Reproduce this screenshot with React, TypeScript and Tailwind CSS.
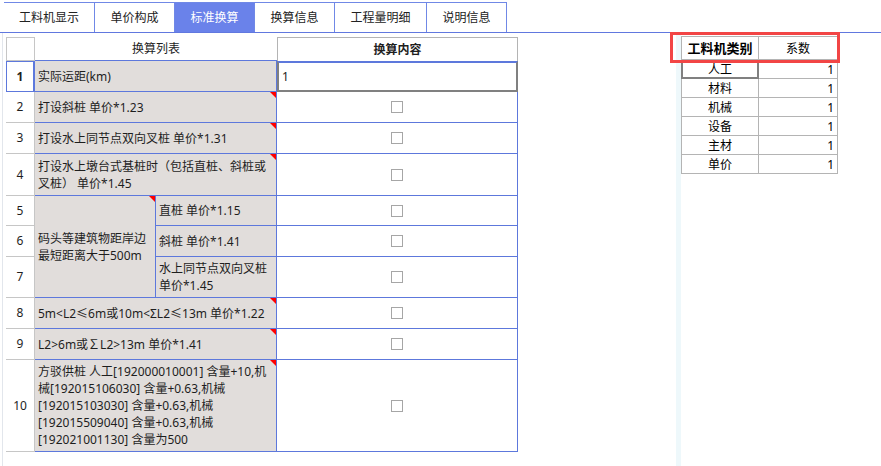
import React from "react";

const BLUE = "border-[#5d78dc]";

function Tri() {
  return (
    <span className="absolute top-0 right-0 w-0 h-0 border-t-[6px] border-l-[6px] border-t-[#ff0000] border-l-transparent" />
  );
}

function Check() {
  return <span className="block w-[12px] h-[12px] border border-[#a6a6a6] bg-white" />;
}

const tabs = [
  { t: "工料机显示", w: "w-[91px]" },
  { t: "单价构成", w: "w-[80px]" },
  { t: "标准换算", w: "w-[80px]", active: true },
  { t: "换算信息", w: "w-[80px]" },
  { t: "工程量明细", w: "w-[92px]" },
  { t: "说明信息", w: "w-[80px]" },
];

const rightRows = ["人工", "材料", "机械", "设备", "主材", "单价"];

export default function App() {
  const num = "flex items-center justify-center border-r border-b border-[#c6c6c6] bg-white";
  const list = `relative flex items-center pl-[3px] pr-[2px] bg-[#e1dddb] border-r border-b ${BLUE} leading-[17px]`;
  const content = `flex items-center justify-center bg-white border-r border-b ${BLUE}`;
  return (
    <div
      className="relative w-[881px] h-[466px] bg-white overflow-hidden flex flex-col text-[12px] text-[#1e1e1e]"
      style={{ fontFamily: '"Noto Sans", "Noto Sans CJK SC", sans-serif' }}
    >
      {/* Tabs */}
      <div className="h-[33px] shrink-0 flex pl-[4px] pt-[2px] border-b border-[#6178df]">
        {tabs.map((tb) => (
          <div
            key={tb.t}
            className={`${tb.w} h-[30px] flex items-center justify-center border-t border-r border-[#7088e6] ${
              tb.active ? "bg-[#6a82ea] text-white" : "bg-white text-[#222]"
            }`}
          >
            {tb.t}
          </div>
        ))}
      </div>

      {/* Body */}
      <div className="flex flex-1">
        {/* Left grid */}
        <div className="ml-[2px] w-[674px] border-l border-[#e2e6ec] pl-[3px] pt-[4px]">
          <div className="grid grid-cols-[29px_121px_121px_241px] grid-rows-[24px_31px_31px_31px_42px_30px_31px_41px_31px_31px_92px]">
            {/* header */}
            <div className="border border-[#c6c6c6] bg-white" />
            <div className={`col-span-2 flex items-center justify-center bg-white border-b ${BLUE}`}>换算列表</div>
            <div className="flex items-center justify-center bg-white border border-[#b4b4b4] border-b-0 font-bold">换算内容</div>

            {/* row 1 */}
            <div className={`flex items-center justify-center border border-r-2 ${BLUE} font-bold bg-white`}>1</div>
            <div className={`col-span-2 ${list}`}>实际运距(km)</div>
            <div className="flex items-center pl-[3px] bg-white border-2 border-[#808080] border-t-[#5d78dc]">1</div>

            {/* row 2 */}
            <div className={num}>2</div>
            <div className={`col-span-2 ${list}`}>
              打设斜桩 单价*1.23
              <Tri />
            </div>
            <div className={content}>
              <Check />
            </div>

            {/* row 3 */}
            <div className={num}>3</div>
            <div className={`col-span-2 ${list}`}>
              打设水上同节点双向叉桩 单价*1.31
              <Tri />
            </div>
            <div className={content}>
              <Check />
            </div>

            {/* row 4 */}
            <div className={num}>4</div>
            <div className={`col-span-2 ${list}`}>
              <span className="whitespace-nowrap">
                打设水上墩台式基桩时（包括直桩、斜桩或
                <br />
                叉桩） 单价*1.45
              </span>
              <Tri />
            </div>
            <div className={content}>
              <Check />
            </div>

            {/* row 5 */}
            <div className={num}>5</div>
            <div className={`row-span-3 ${list}`}>
              <span className="whitespace-nowrap">
                码头等建筑物距岸边
                <br />
                最短距离大于500m
              </span>
              <Tri />
            </div>
            <div className={list}>直桩 单价*1.15</div>
            <div className={content}>
              <Check />
            </div>

            {/* row 6 */}
            <div className={num}>6</div>
            <div className={list}>斜桩 单价*1.41</div>
            <div className={content}>
              <Check />
            </div>

            {/* row 7 */}
            <div className={num}>7</div>
            <div className={list}>
              <span className="whitespace-nowrap">
                水上同节点双向叉桩
                <br />
                单价*1.45
              </span>
            </div>
            <div className={content}>
              <Check />
            </div>

            {/* row 8 */}
            <div className={num}>8</div>
            <div className={`col-span-2 ${list}`}>
              5m&lt;L2≤6m或10m&lt;ΣL2≤13m 单价*1.22
              <Tri />
            </div>
            <div className={content}>
              <Check />
            </div>

            {/* row 9 */}
            <div className={num}>9</div>
            <div className={`col-span-2 ${list}`}>
              L2&gt;6m或∑L2&gt;13m 单价*1.41
              <Tri />
            </div>
            <div className={content}>
              <Check />
            </div>

            {/* row 10 */}
            <div className={num}>10</div>
            <div className={`col-span-2 ${list} overflow-hidden`}>
              <span className="whitespace-nowrap">
                方驳供桩 人工[192000010001] 含量+10,机
                <br />
                械[192015106030] 含量+0.63,机械
                <br />
                [192015103030] 含量+0.63,机械
                <br />
                [192015509040] 含量+0.63,机械
                <br />
                [192021001130] 含量为500
              </span>
              <Tri />
            </div>
            <div className={content}>
              <Check />
            </div>
          </div>
        </div>

        {/* splitter strip */}
        <div className="w-[5px] bg-[#eef8fb]" />

        {/* Right table */}
        <div className="pt-[3px]">
          <div className="grid grid-cols-[78px_79px] grid-rows-[24px_19px_19px_19px_19px_19px_19px] w-[157px] text-black">
            <div className="flex items-center justify-center pt-[2px] border border-[#b4b4b4] font-bold text-[13px] bg-white">
              工料机类别
            </div>
            <div className="flex items-center justify-center pt-[2px] border-t border-r border-b border-[#b4b4b4] bg-white">
              系数
            </div>
            {rightRows.map((r, i) => (
              <React.Fragment key={r}>
                <div
                  className={`flex items-center justify-center pt-[2px] bg-white ${
                    i === 0
                      ? "border-2 border-t-0 border-[#808080]"
                      : "border-l border-r border-b border-[#b4b4b4]"
                  }`}
                >
                  {r}
                </div>
                <div className="flex items-center justify-end pt-[2px] pr-[3px] border-r border-b border-[#b4b4b4] bg-white">
                  1
                </div>
              </React.Fragment>
            ))}
          </div>
        </div>
      </div>

      {/* red highlight overlay */}
      <div className="absolute left-[670px] top-[32px] w-[170px] h-[31px] border-[3px] border-[#f24545] pointer-events-none" />
    </div>
  );
}
